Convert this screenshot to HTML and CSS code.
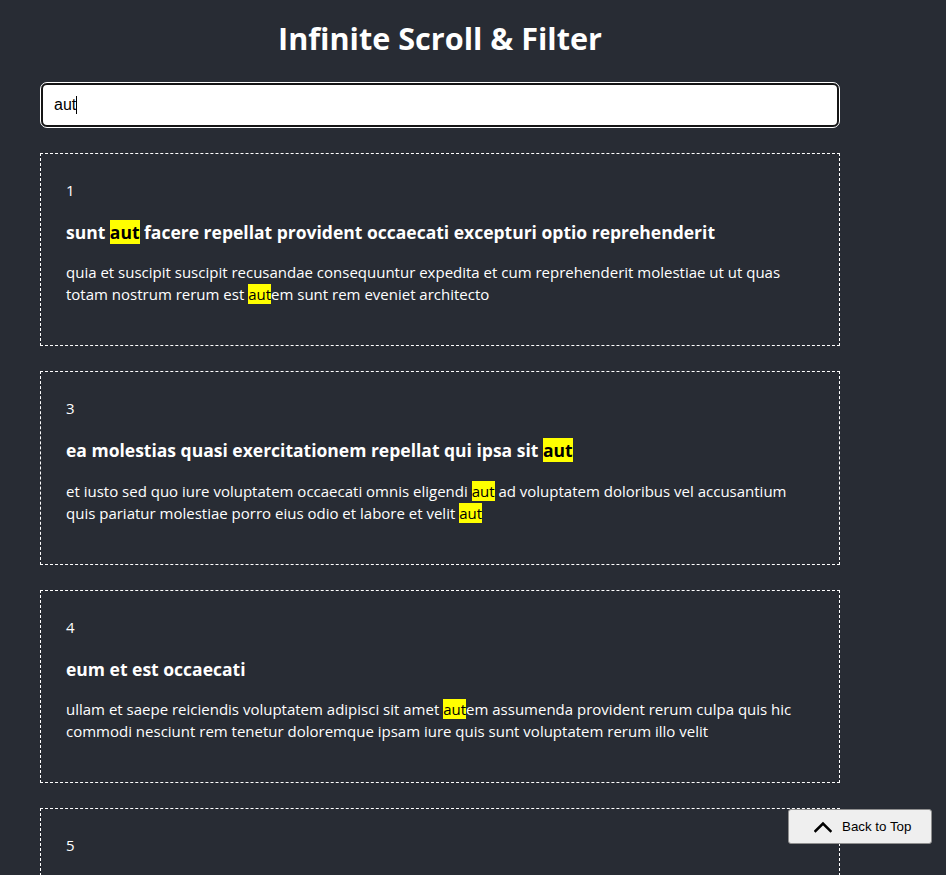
FILE: index.html
```html
<!DOCTYPE html>
<html lang="en">
<head>
<meta charset="utf-8">
<title>Infinite Scroll &amp; Filter</title>
<link rel="stylesheet" href="styles.css">
</head>
<body>
<div class="app">
  <h1 class="title">Infinite Scroll &amp; Filter</h1>
  <div class="search-wrap">
    <input class="search" type="text" value="aut">
    <span class="caret"></span>
  </div>
  <div class="list">
    <div class="card">
      <div class="num">1</div>
      <h3 class="card-title">sunt <mark>aut</mark> facere repellat provident occaecati excepturi optio reprehenderit</h3>
      <p class="card-body">quia et suscipit suscipit recusandae consequuntur expedita et cum reprehenderit molestiae ut ut quas totam nostrum rerum est <mark>aut</mark>em sunt rem eveniet architecto</p>
    </div>
    <div class="card">
      <div class="num">3</div>
      <h3 class="card-title">ea molestias quasi exercitationem repellat qui ipsa sit <mark>aut</mark></h3>
      <p class="card-body">et iusto sed quo iure voluptatem occaecati omnis eligendi <mark>aut</mark> ad voluptatem doloribus vel accusantium quis pariatur molestiae porro eius odio et labore et velit <mark>aut</mark></p>
    </div>
    <div class="card">
      <div class="num">4</div>
      <h3 class="card-title">eum et est occaecati</h3>
      <p class="card-body">ullam et saepe reiciendis voluptatem adipisci sit amet <mark>aut</mark>em assumenda provident rerum culpa quis hic commodi nesciunt rem tenetur doloremque ipsam iure quis sunt voluptatem rerum illo velit</p>
    </div>
    <div class="card">
      <div class="num">5</div>
      <h3 class="card-title">nesciunt quas odio</h3>
      <p class="card-body">repudiandae veniam quaerat sunt sed alias <mark>aut</mark> fugiat sit <mark>aut</mark>em sed est voluptatem omnis possimus esse voluptatibus quis est <mark>aut</mark> tenetur dolor neque</p>
    </div>
  </div>
</div>
<button class="back-top" type="button">
  <svg class="chev" width="18" height="12" viewBox="0 0 18 12" aria-hidden="true"><polyline points="1.5,10 9,2.5 16.5,10" fill="none" stroke="#000" stroke-width="2.6" stroke-linecap="square" stroke-linejoin="miter"/></svg>
  <span>Back to Top</span>
</button>
</body>
</html>
```
FILE: styles.css
```css
html, body {
  margin: 0;
  padding: 0;
  background: #282c34;
  overflow: hidden;
}
body {
  font-family: "Open Sans", "Noto Sans", sans-serif;
  color: #fff;
}
.app {
  width: 800px;
  padding: 16px 40px 0;
}
.title {
  margin: 0 0 22px;
  font-size: 30.6px;
  line-height: 44px;
  font-weight: 700;
  text-align: center;
}
.search-wrap {
  position: relative;
  padding: 1px;
}
.search {
  display: block;
  box-sizing: border-box;
  width: 100%;
  height: 44px;
  margin: 0;
  padding: 0 10px 0 11px;
  border: 2px solid #151515;
  border-radius: 6px;
  outline: 1px solid #fff;
  background: #fff;
  color: #000;
  font-family: "Liberation Sans", Arial, sans-serif;
  font-size: 16px;
}
.caret {
  position: absolute;
  left: 36px;
  top: 14px;
  width: 1px;
  height: 18px;
  background: #000;
}
.list {
  display: flex;
  flex-direction: column;
  gap: 25px;
  margin-top: 25px;
}
.card {
  border: 1px dashed #fff;
  padding: 25px 25px 26px;
}
.num {
  font-size: 15px;
  line-height: 22px;
}
.card-title {
  margin: 18px 0 16px;
  font-size: 17.5px;
  line-height: 26.33px;
  font-weight: 700;
}
.card-body {
  margin: 0 0 14px;
  font-size: 15px;
  line-height: 22px;
}
mark {
  background: #ffff00;
  color: #000;
}
.back-top {
  position: fixed;
  right: 14px;
  bottom: 31px;
  box-sizing: border-box;
  height: 35px;
  width: 144px;
  display: flex;
  align-items: center;
  gap: 10px;
  padding: 0 0 0 25px;
  background: #efefef;
  border: 1px solid #8f8f8f;
  border-radius: 3px;
  color: #000;
  font-family: "Liberation Sans", Arial, sans-serif;
  font-size: 13.33px;
}
.chev {
  display: block;
  flex: none;
}
```
